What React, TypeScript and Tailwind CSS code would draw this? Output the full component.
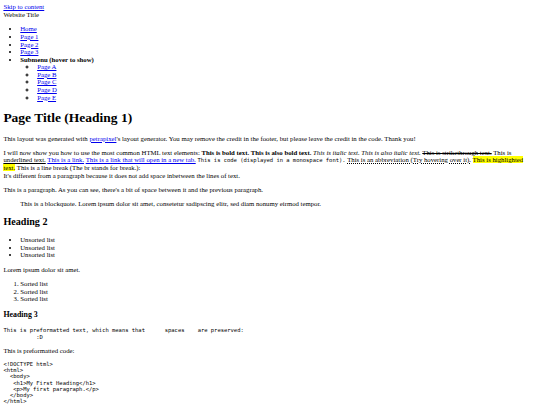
const link = 'text-[#0000ee] underline'
const mono = "font-['DejaVu_Sans_Mono',monospace] text-[13px] leading-[14.8px]"

const navPages = ['Home', 'Page 1', 'Page 2', 'Page 3']
const subPages = ['Page A', 'Page B', 'Page C', 'Page D', 'Page E']

const preText = `This is preformatted text, which means that      spaces    are preserved:
          :D`

const preCode = `<!DOCTYPE html>
<html>
  <body>
   <h1>My First Heading</h1>
   <p>My first paragraph.</p>
  </body>
</html>`

export default function App() {
  return (
    <div className="[zoom:0.421875] bg-white text-black font-['Liberation_Serif',serif] text-[16px] leading-[1.125]">
      <div className="m-2">
        <div>
          <a href="#content" className={link}>
            Skip to content
          </a>
        </div>
        <header>
          <div>Website Title</div>
          <nav>
            <ul className="my-[1em] pl-[40px] list-disc">
              {navPages.map((p) => (
                <li key={p}>
                  <a href="#" className={link}>
                    {p}
                  </a>
                </li>
              ))}
              <li>
                <strong className="font-bold">Submenu (hover to show)</strong>
                <ul className="pl-[40px] list-[circle]">
                  {subPages.map((p) => (
                    <li key={p} className="list-[circle]">
                      <a href="#" className={link}>
                        {p}
                      </a>
                    </li>
                  ))}
                </ul>
              </li>
            </ul>
          </nav>
        </header>

        <main id="content">
          <h1 className="text-[2em] font-bold my-[0.67em]">Page Title (Heading 1)</h1>
          <p className="my-[1em]">
            This layout was generated with{' '}
            <a href="#" className={link}>
              petrapixel
            </a>
            's layout generator. You may remove the credit in the footer, but please leave the credit in the code.
            Thank you!
          </p>
          <p className="my-[1em]">
            I will now show you how to use the most common HTML text elements: <b className="font-bold">This is bold text.</b>{' '}
            <strong className="font-bold">This is also bold text.</strong> <i className="italic">This is italic text.</i>{' '}
            <em className="italic">This is also italic text.</em> <del className="line-through">This is strikethrough text.</del>{' '}
            <u className="underline">This is underlined text.</u>{' '}
            <a href="#" className={link}>
              This is a link.
            </a>{' '}
            <a href="#" className={link}>
              This is a link that will open in a new tab.
            </a>{' '}
            <code className={mono}>This is code (displayed in a monospace font).</code>{' '}
            <abbr title="Abbreviation" className="underline decoration-dotted">
              This is an abbreviation (Try hovering over it).
            </abbr>{' '}
            <mark className="bg-[#ffff00] text-black">This is highlighted text.</mark> This is a line break (The br stands
            for break.):
            <br />
            It's different from a paragraph because it does not add space inbetween the lines of text.
          </p>
          <p className="my-[1em]">
            This is a paragraph. As you can see, there's a bit of space between it and the previous paragraph.
          </p>
          <blockquote className="my-[1em] mx-[40px]">
            This is a blockquote. Lorem ipsum dolor sit amet, consetetur sadipscing elitr, sed diam nonumy eirmod tempor.
          </blockquote>

          <h2 className="text-[1.5em] font-bold my-[0.83em]">Heading 2</h2>
          <ul className="my-[1em] pl-[40px] list-disc">
            <li>Unsorted list</li>
            <li>Unsorted list</li>
            <li>Unsorted list</li>
          </ul>
          <p className="my-[1em]">Lorem ipsum dolor sit amet.</p>
          <ol className="my-[1em] pl-[40px] list-decimal">
            <li>Sorted list</li>
            <li>Sorted list</li>
            <li>Sorted list</li>
          </ol>

          <h3 className="text-[1.17em] font-bold my-[1em]">Heading 3</h3>
          <pre className={`${mono} my-[1em] whitespace-pre`}>{preText}</pre>
          <p className="my-[1em]">This is preformatted code:</p>
          <pre className={`${mono} my-[1em] whitespace-pre`}>
            <code className={mono}>{preCode}</code>
          </pre>
        </main>
      </div>
    </div>
  )
}
